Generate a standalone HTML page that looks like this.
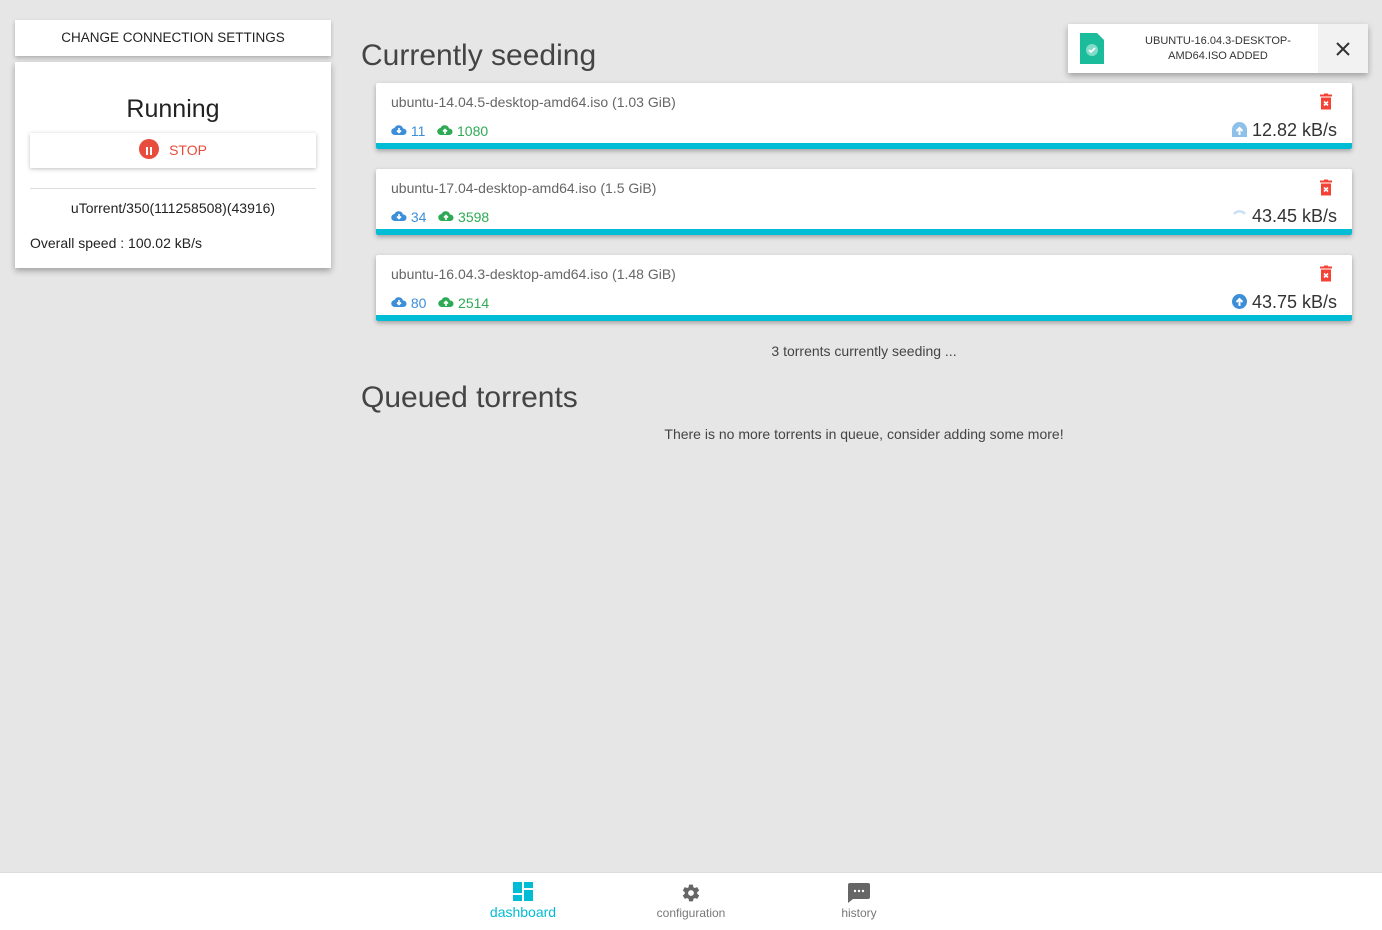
<!DOCTYPE html>
<html><head><style>
body{margin:0;width:1382px;height:929px;background:#e6e6e6;font-family:"Liberation Sans",sans-serif;position:relative;overflow:hidden;color:#222}
.abs{position:absolute}
.card{background:#fff;box-shadow:0 2px 4px rgba(0,0,0,.25)}
.t{position:absolute;left:376px;width:976px;height:66px;background:#fff;box-shadow:0 2px 5px rgba(0,0,0,.3);border-radius:2px}
.t .n{position:absolute;left:15px;top:11px;font-size:14px;color:#666}
.t .s{position:absolute;left:15px;top:40px;font-size:14px}
.t .bar{position:absolute;left:0;right:0;bottom:0;height:6px;background:#00bcd4;border-radius:0 0 2px 2px}
.t .sp{position:absolute;right:15px;top:37px;font-size:18px;color:#333}
.t .del{position:absolute;right:19px;top:10px}
.b{color:#3d8ed8}.g{color:#2eaa55}
</style></head><body>
<div class="abs card" style="left:15px;top:20px;width:316px;height:36px;text-align:center;line-height:36px;font-size:13.5px;color:#222">CHANGE CONNECTION SETTINGS</div>
<div class="abs card" style="left:15px;top:62px;width:316px;height:206px;box-shadow:0 3px 6px rgba(0,0,0,.3)">
 <div class="abs" style="left:0;right:0;top:33px;text-align:center;font-size:25px;color:#222">Running</div>
 <div class="abs" style="left:15px;width:286px;top:71px;height:35px;box-shadow:0 1px 4px rgba(0,0,0,.25);text-align:center;line-height:35px;font-size:14px;color:#e74c3c">
  <span style="display:inline-block;width:20px;height:20px;border-radius:50%;background:#e74c3c;vertical-align:middle;margin-right:10px;position:relative;top:-2px"><svg width="20" height="20"><rect x="7" y="6" width="2" height="8" fill="#fff"/><rect x="11" y="6" width="2" height="8" fill="#fff"/></svg></span>STOP</div>
 <div class="abs" style="left:15px;width:286px;top:126px;border-top:1px solid #ddd"></div>
 <div class="abs" style="left:0;right:0;top:138px;text-align:center;font-size:14px">uTorrent/350(111258508)(43916)</div>
 <div class="abs" style="left:15px;top:173px;font-size:14px">Overall speed : 100.02 kB/s</div>
</div>
<div class="abs" style="left:361px;top:39px;font-size:30px;color:#444">Currently seeding</div>
<div class="abs" style="left:361px;top:381px;font-size:30px;color:#444">Queued torrents</div>

<svg width="0" height="0" style="position:absolute"><defs>
<symbol id="cd" viewBox="0 0 16 12"><path d="M4 11a3.5 3.5 0 0 1-.5-7A4.5 4.5 0 0 1 12 4.5 3 3 0 0 1 12.5 11z" fill="currentColor"/><path d="M8 4v4M6 6.5l2 2 2-2" stroke="#fff" stroke-width="1.6" fill="none"/></symbol>
<symbol id="cu" viewBox="0 0 16 12"><path d="M4 11a3.5 3.5 0 0 1-.5-7A4.5 4.5 0 0 1 12 4.5 3 3 0 0 1 12.5 11z" fill="currentColor"/><path d="M8 10V6M6 7.5l2-2 2 2" stroke="#fff" stroke-width="1.6" fill="none"/></symbol>
<symbol id="tr" viewBox="0 0 14 16"><rect x="1" y="1" width="12" height="2" fill="#f44336"/><rect x="5" y="0" width="4" height="2" fill="#f44336"/><rect x="2" y="4" width="10" height="12" fill="#f44336"/><path d="M5 8l4 4M9 8l-4 4" stroke="#fff" stroke-width="1.6"/></symbol>
</defs></svg>

<div class="t" style="top:83px"><div class="n">ubuntu-14.04.5-desktop-amd64.iso (1.03 GiB)</div>
<div class="s"><svg width="16" height="12" style="color:#3d8ed8"><use href="#cd"/></svg><span class="b"> 11</span>&nbsp;&nbsp; <svg width="16" height="12" style="color:#2eaa55"><use href="#cu"/></svg><span class="g"> 1080</span></div>
<svg class="del" width="14" height="17"><use href="#tr"/></svg>
<div class="sp"><svg width="15" height="15" style="vertical-align:-1px"><path d="M0 15V7.5a7.5 7.5 0 0 1 15 0V15z" fill="#8ec1ea"/><path d="M7.5 13V6M4.5 9l3-3 3 3" stroke="#fff" stroke-width="2" fill="none"/></svg> 12.82 kB/s</div>
<div class="bar"></div></div>

<div class="t" style="top:169px"><div class="n">ubuntu-17.04-desktop-amd64.iso (1.5 GiB)</div>
<div class="s"><svg width="16" height="12" style="color:#3d8ed8"><use href="#cd"/></svg><span class="b"> 34</span>&nbsp;&nbsp; <svg width="16" height="12" style="color:#2eaa55"><use href="#cu"/></svg><span class="g"> 3598</span></div>
<svg class="del" width="14" height="17"><use href="#tr"/></svg>
<div class="sp"><svg width="15" height="15" style="vertical-align:-1px"><path d="M2 6a7 7 0 0 1 11 0" stroke="#c8e0f4" stroke-width="2.5" fill="none"/></svg> 43.45 kB/s</div>
<div class="bar"></div></div>

<div class="t" style="top:255px"><div class="n">ubuntu-16.04.3-desktop-amd64.iso (1.48 GiB)</div>
<div class="s"><svg width="16" height="12" style="color:#3d8ed8"><use href="#cd"/></svg><span class="b"> 80</span>&nbsp;&nbsp; <svg width="16" height="12" style="color:#2eaa55"><use href="#cu"/></svg><span class="g"> 2514</span></div>
<svg class="del" width="14" height="17"><use href="#tr"/></svg>
<div class="sp"><svg width="15" height="15" style="vertical-align:-1px"><circle cx="7.5" cy="7.5" r="7.5" fill="#3d8ed8"/><path d="M7.5 12V5M4.5 8l3-3 3 3" stroke="#fff" stroke-width="2" fill="none"/></svg> 43.75 kB/s</div>
<div class="bar"></div></div>

<div class="abs" style="left:376px;width:976px;top:343px;text-align:center;font-size:14px;color:#444">3 torrents currently seeding ...</div>
<div class="abs" style="left:376px;width:976px;top:426px;text-align:center;font-size:14px;color:#444">There is no more torrents in queue, consider adding some more!</div>

<div class="abs" style="left:1068px;top:24px;width:300px;height:49px;background:#fff;box-shadow:0 3px 6px rgba(0,0,0,.3)">
 <svg class="abs" style="left:12px;top:9px" width="24" height="31"><path d="M0 0h17l7 7v24H0z" fill="#1abc9c"/><circle cx="12" cy="17" r="6" fill="#7fdcc8"/><path d="M9 17l2 2 4-4" stroke="#fff" stroke-width="1.8" fill="none"/></svg>
 <div class="abs" style="left:60px;width:180px;top:10px;text-align:center;font-size:11px;line-height:15px;color:#333">UBUNTU-16.04.3-DESKTOP-<br>AMD64.ISO ADDED</div>
 <div class="abs" style="left:250px;top:0;width:50px;height:49px;background:#f2f2f2"><svg class="abs" style="left:18px;top:18px" width="14" height="14"><path d="M1 1l12 12M13 1L1 13" stroke="#333" stroke-width="2"/></svg></div>
</div>

<div class="abs" style="left:0;top:872px;width:1382px;height:57px;background:#fff;border-top:1px solid #ddd">
 <svg class="abs" style="left:513px;top:9px" width="20" height="19"><rect x="0" y="0" width="9" height="11" fill="#00bcd4"/><rect x="11" y="0" width="9" height="6" fill="#00bcd4"/><rect x="0" y="13" width="9" height="6" fill="#00bcd4"/><rect x="11" y="8" width="9" height="11" fill="#00bcd4"/></svg>
 <div class="abs" style="left:473px;width:100px;top:31px;text-align:center;font-size:14px;color:#00bcd4">dashboard</div>
 <svg class="abs" style="left:681px;top:10px" width="20" height="20" viewBox="0 0 24 24"><path fill="#666" d="M19.4 13c.04-.33.06-.66.06-1s-.02-.67-.06-1l2.1-1.65c.2-.15.25-.42.12-.64l-2-3.46c-.12-.22-.39-.3-.61-.22l-2.5 1c-.52-.4-1.08-.73-1.69-.98l-.38-2.65A.49.49 0 0 0 14 2h-4c-.25 0-.46.18-.49.42l-.38 2.650c-.61.25-1.170.59-1.690.98l-2.5-1c-.23-.09-.49 0-.61.22l-2 3.46c-.13.22-.07.49.12.64L4.57 11c-.04.33-.07.67-.07 1s.03.67.07 1l-2.11 1.65c-.19.15-.24.42-.12.64l2 3.46c.12.22.39.3.61.22l2.5-1c.52.4 1.08.73 1.69.98l.38 2.65c.03.24.24.42.49.42h4c.25 0 .46-.18.49-.42l.38-2.65c.61-.25 1.17-.59 1.69-.98l2.5 1c.23.09.49 0 .61-.22l2-3.46c.12-.22.07-.49-.12-.64L19.4 13zM12 15.5a3.5 3.5 0 1 1 0-7 3.5 3.5 0 0 1 0 7z"/></svg>
 <div class="abs" style="left:641px;width:100px;top:33px;text-align:center;font-size:12px;color:#777">configuration</div>
 <svg class="abs" style="left:848px;top:10px" width="22" height="20"><path d="M2 0h18a2 2 0 0 1 2 2v12a2 2 0 0 1-2 2H5l-5 4V2a2 2 0 0 1 2-2z" fill="#666"/><circle cx="7" cy="8" r="1.2" fill="#fff"/><circle cx="11" cy="8" r="1.2" fill="#fff"/><circle cx="15" cy="8" r="1.2" fill="#fff"/></svg>
 <div class="abs" style="left:809px;width:100px;top:33px;text-align:center;font-size:12px;color:#777">history</div>
</div>
</body></html>
